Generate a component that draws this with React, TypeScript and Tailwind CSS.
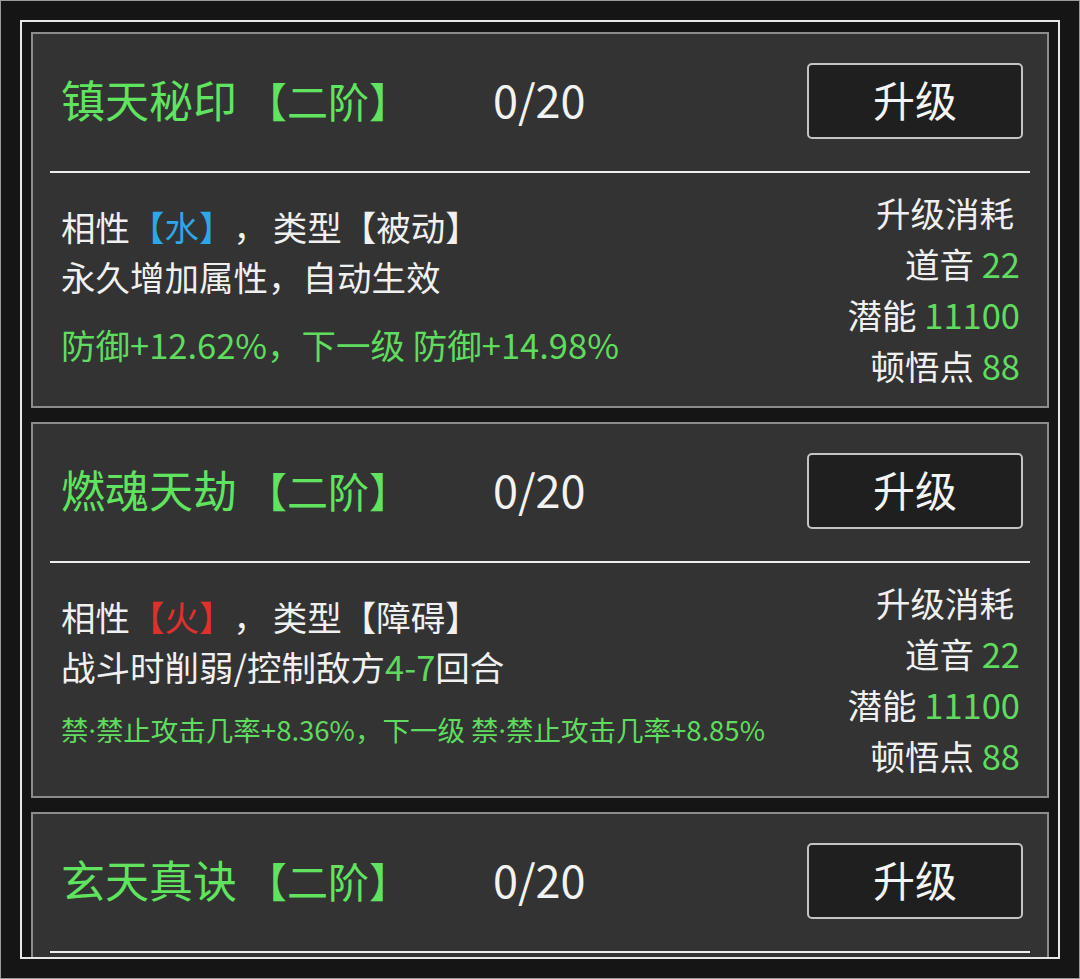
import React from 'react'

type Skill = {
  name: string
  affinity: string
  affinityColor: string
  kind: string
  desc: React.ReactNode
  effect: React.ReactNode
  small?: boolean
}

const Dot = () => <span style={{ fontFamily: '"Noto Sans", sans-serif' }}>·</span>

const skills: Skill[] = [
  {
    name: '镇天秘印',
    affinity: '水',
    affinityColor: 'text-[#2ea6e8]',
    kind: '被动',
    desc: '永久增加属性，自动生效',
    effect: '防御+12.62%，下一级 防御+14.98%',
  },
  {
    name: '燃魂天劫',
    affinity: '火',
    affinityColor: 'text-[#e0302c]',
    kind: '障碍',
    desc: (
      <>
        战斗时削弱/控制敌方<span className="text-[#5fd85f]">4-7</span>回合
      </>
    ),
    effect: (
      <>
        禁<Dot />禁止攻击几率+8.36%，下一级 禁<Dot />禁止攻击几率+8.85%
      </>
    ),
    small: true,
  },
  {
    name: '玄天真诀',
    affinity: '金',
    affinityColor: 'text-[#e8c02e]',
    kind: '被动',
    desc: '永久增加属性，自动生效',
    effect: '攻击+12.62%，下一级 攻击+14.98%',
  },
]

const costs = [
  { label: '道音', value: '22' },
  { label: '潜能', value: '11100' },
  { label: '顿悟点', value: '88' },
]

const SkillCard: React.FC<{ skill: Skill }> = ({ skill }) => {
  return (
    <div className="shrink-0 h-[376px] border-2 border-[#8c8c8c] bg-[#333333]">
      <div className="flex items-center h-[137px] pl-[28px] pr-[24px]">
        <div className="w-[432px] mt-[-8px] text-[44px] text-[#60e460] leading-none">
          {skill.name}
          <span className="ml-[9px] text-[41px]">【二阶】</span>
        </div>
        <div className="mt-[-8px] text-[45px] text-[#f2f2f2] leading-none">0/20</div>
        <button className="ml-auto w-[216px] h-[76px] mt-[-4px] pb-[4px] rounded-[5px] border-2 border-[#c4c4c4] bg-[#1f1f1f] text-[42px] text-[#f4f4f4] leading-none">
          升级
        </button>
      </div>
      <div className="mx-[17px] h-[2px] bg-[#eeeeee]" />
      <div className="flex justify-between pl-[28px] pr-[27px]">
        <div className="pt-[28px] text-[34.5px] leading-[50px] text-[#f0f0f0]">
          <div>
            相性<span className={skill.affinityColor}>【{skill.affinity}】</span>
            <span className="ml-[17px] mr-[5px]">，</span>类型【{skill.kind}】
          </div>
          <div>{skill.desc}</div>
          {skill.small ? (
            <div className="mt-[13px] text-[27.5px] leading-[50px] text-[#5fdc5f]">{skill.effect}</div>
          ) : (
            <div className="mt-[18px] text-[34.5px] leading-[50px] text-[#5fdc5f]">{skill.effect}</div>
          )}
        </div>
        <div className="pt-[14px] text-[34.5px] leading-[51px] text-[#f0f0f0] text-right">
          <div className="pr-[6px]">升级消耗</div>
          {costs.map((c) => (
            <div key={c.label}>
              {c.label} <span className="text-[#5fdc5f]">{c.value}</span>
            </div>
          ))}
        </div>
      </div>
    </div>
  )
}

export default function App() {
  return (
    <div
      className="w-[1080px] h-[979px] bg-[#151515] border border-[#9a9a9a] p-[19px]"
      style={{ fontFamily: '"Noto Sans CJK SC", "Noto Sans", sans-serif' }}
    >
      <div className="w-[1040px] h-[939px] border-2 border-[#e8e8e8] overflow-hidden flex flex-col gap-[14px] pt-[10px] px-[9px]">
        {skills.map((s) => (
          <SkillCard key={s.name} skill={s} />
        ))}
      </div>
    </div>
  )
}
